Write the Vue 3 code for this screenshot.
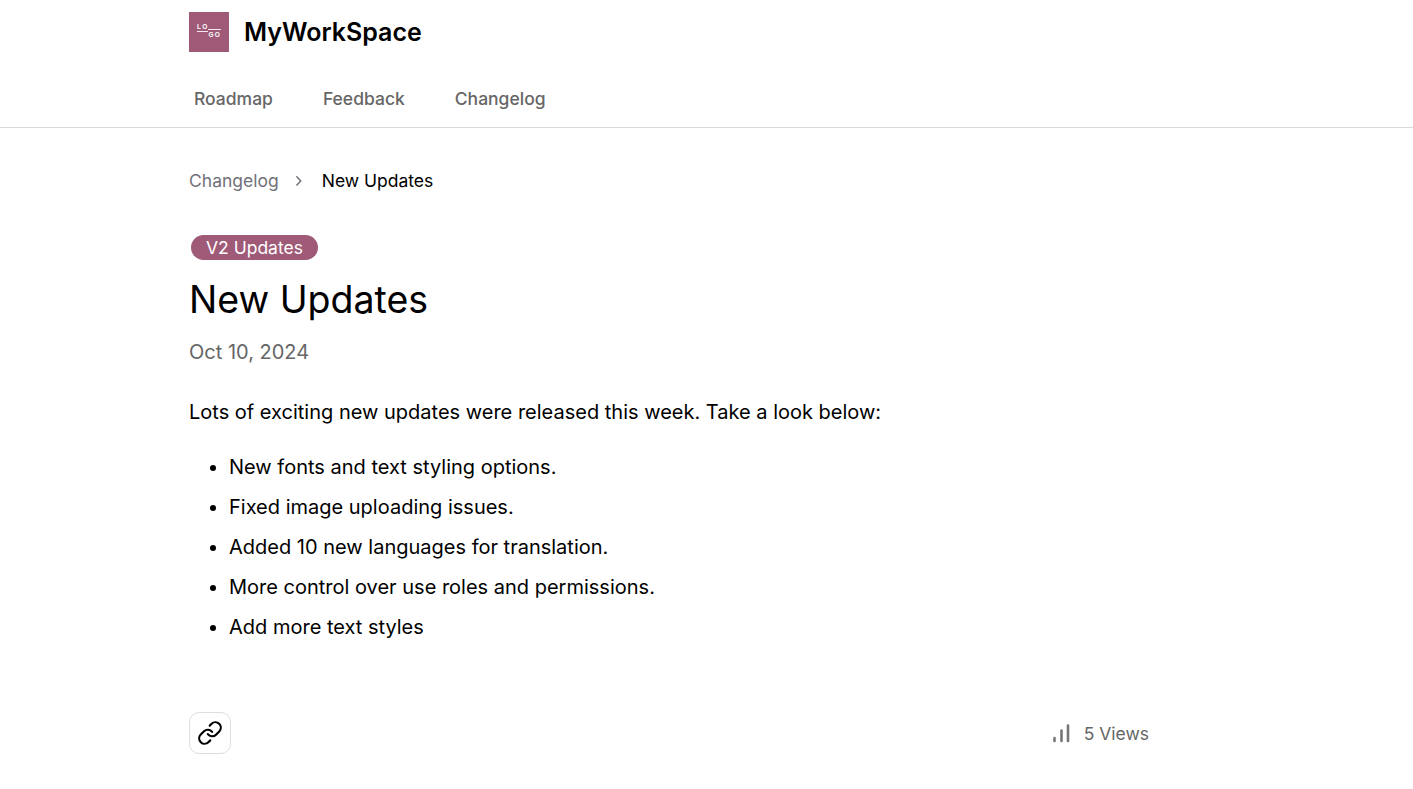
<script setup>
const navItems = ['Roadmap', 'Feedback', 'Changelog']
const bullets = [
  'New fonts and text styling options.',
  'Fixed image uploading issues.',
  'Added 10 new languages for translation.',
  'More control over use roles and permissions.',
  'Add more text styles',
]
</script>

<template>
  <div class="page">
    <header class="header">
      <div class="container">
        <div class="brand">
          <div class="logo">
            <span class="logo-row"><span class="logo-word">LO</span><span class="logo-word low">GO</span></span>
          </div>
          <span class="brand-name">MyWorkSpace</span>
        </div>
        <nav class="nav">
          <a v-for="item in navItems" :key="item" class="nav-link">{{ item }}</a>
        </nav>
      </div>
    </header>
    <main class="container main">
      <div class="content">
        <div class="crumbs">
          <span class="crumb">Changelog</span>
          <svg class="chev" width="20" height="20" viewBox="0 0 20 20" fill="none" stroke="#71717a" stroke-width="1.5" stroke-linecap="round" stroke-linejoin="round"><path d="M7.8 5.8 11.8 10 7.8 14"/></svg>
          <span class="crumb-current">New Updates</span>
        </div>
        <span class="tag">V2 Updates</span>
        <h1 class="title">New Updates</h1>
        <div class="date">Oct 10, 2024</div>
        <p class="intro">Lots of exciting new updates were released this week. Take a look below:</p>
        <ul class="list">
          <li v-for="b in bullets" :key="b">{{ b }}</li>
        </ul>
        <div class="footer">
          <button class="link-btn" aria-label="Copy link">
            <svg width="26" height="26" viewBox="0 0 24 24" fill="none" stroke="#000" stroke-width="2" stroke-linecap="round" stroke-linejoin="round"><path d="M10 13a5 5 0 0 0 7.54.54l3-3a5 5 0 0 0-7.07-7.07l-1.72 1.71"/><path d="M14 11a5 5 0 0 0-7.54-.54l-3 3a5 5 0 0 0 7.07 7.07l1.71-1.71"/></svg>
          </button>
          <div class="views">
            <svg width="20" height="20" viewBox="0 0 20 20" fill="none" stroke="#777" stroke-width="2.6" stroke-linecap="round"><path d="M2.5 18v-3"/><path d="M9.5 18V7.5"/><path d="M16 18V2.5"/></svg>
            <span class="views-text">5 Views</span>
          </div>
        </div>
      </div>
    </main>
  </div>
</template>

<style>
html, body { margin: 0; background: #fff; }
</style>

<style scoped>
.page {
  font-family: Inter, "Noto Sans", sans-serif;
  color: #000;
  min-height: 789px;
  background: #fff;
}
.container {
  width: 1035px;
  margin: 0 auto;
}
.header {
  border-bottom: 1px solid #d9d9d9;
  height: 127px;
}
.brand {
  display: flex;
  align-items: center;
  gap: 15px;
  padding-top: 12px;
}
.logo {
  width: 40px;
  height: 40px;
  background: #9f5a78;
  display: flex;
  align-items: center;
  justify-content: center;
}
.logo-row {
  display: flex;
  align-items: flex-start;
  font-family: "Liberation Sans", sans-serif;
  font-size: 6.5px;
  font-weight: 700;
  letter-spacing: 1.2px;
  color: #fff;
  line-height: 6px;
}
.logo-word {
  display: block;
  height: 6px;
  padding-bottom: 1px;
  border-bottom: 1px solid #f6e6ed;
  margin-top: -3px;
}
.logo-word.low {
  padding: 2px 0 0;
  border-bottom: 0;
  border-top: 1px solid #f6e6ed;
  margin-top: 2px;
}
.brand-name {
  font-size: 25px;
  font-weight: 600;
  line-height: 40px;
  color: #000;
}
.nav {
  display: flex;
  gap: 50px;
  padding: 35px 0 0 5px;
}
.nav-link {
  font-size: 17.5px;
  font-weight: 500;
  line-height: 24px;
  color: #666;
}
.content {
  width: 960px;
  padding-top: 41px;
}
.crumbs {
  display: flex;
  align-items: center;
  height: 24px;
  font-size: 17.5px;
  line-height: 24px;
}
.crumb { color: #71717a; }
.chev { margin: 0 13px 0 10px; }
.crumb-current { color: #000; }
.tag {
  display: block;
  width: fit-content;
  margin: 42px 0 0 2px;
  padding: 0 15px;
  height: 25px;
  line-height: 26px;
  border-radius: 13px;
  background: #9f5a78;
  color: #fff;
  font-size: 17.5px;
}
.title {
  margin: 18px 0 0;
  font-size: 37.5px;
  font-weight: 400;
  line-height: 44px;
  color: #000;
}
.date {
  margin-top: 16px;
  font-size: 20px;
  line-height: 28px;
  color: #666;
}
.intro {
  margin: 32px 0 0;
  font-size: 20px;
  line-height: 28px;
  color: #000;
}
.list {
  margin: 21px 0 0;
  padding-left: 40px;
  font-size: 20px;
  line-height: 40px;
}
.footer {
  margin-top: 65px;
  display: flex;
  justify-content: space-between;
  align-items: center;
}
.link-btn {
  width: 42px;
  height: 42px;
  padding: 0;
  border: 1px solid #dedede;
  border-radius: 10px;
  background: #fff;
  display: flex;
  align-items: center;
  justify-content: center;
}
.views {
  display: flex;
  align-items: center;
  gap: 12px;
  font-size: 17.5px;
  color: #666;
  line-height: 24px;
}
.views-text {
  line-height: 26px;
  height: 24px;
}
</style>
